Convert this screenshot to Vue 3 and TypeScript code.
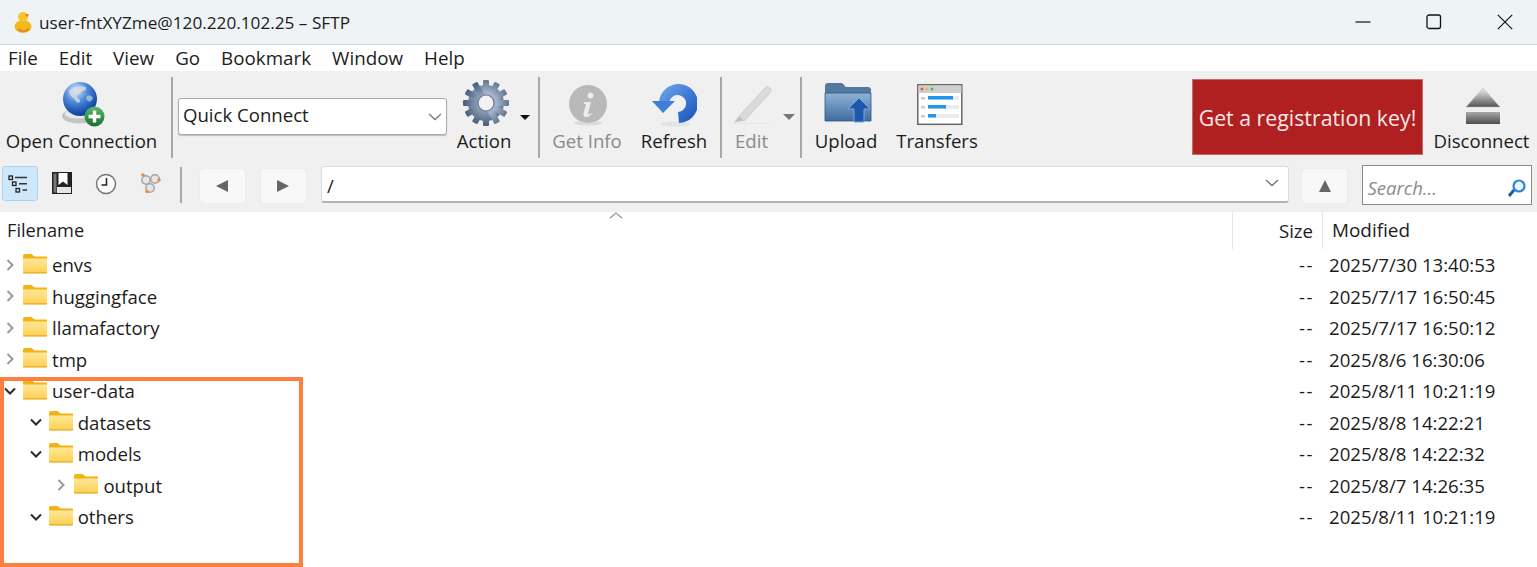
<script setup lang="ts">
interface Row { name: string; depth: number; open: boolean; date: string }
const rows: Row[] = [
  { name: 'envs', depth: 0, open: false, date: '2025/7/30 13:40:53' },
  { name: 'huggingface', depth: 0, open: false, date: '2025/7/17 16:50:45' },
  { name: 'llamafactory', depth: 0, open: false, date: '2025/7/17 16:50:12' },
  { name: 'tmp', depth: 0, open: false, date: '2025/8/6 16:30:06' },
  { name: 'user-data', depth: 0, open: true, date: '2025/8/11 10:21:19' },
  { name: 'datasets', depth: 1, open: true, date: '2025/8/8 14:22:21' },
  { name: 'models', depth: 1, open: true, date: '2025/8/8 14:22:32' },
  { name: 'output', depth: 2, open: false, date: '2025/8/7 14:26:35' },
  { name: 'others', depth: 1, open: true, date: '2025/8/11 10:21:19' },
]
const menus = ['File', 'Edit', 'View', 'Go', 'Bookmark', 'Window', 'Help']
const indent = (d: number) => ({ paddingLeft: `${d * 25.7}px` })
const gearTeeth = [0, 30, 60, 90, 120, 150]
</script>

<template>
  <div class="app">
    <header class="title">
      <svg class="duck" width="22" height="24" viewBox="0 0 22 24">
        <ellipse cx="11" cy="16.500" rx="8.500" ry="6.500" fill="#f5b81f"/>
        <circle cx="11" cy="7" r="5" fill="#f7c52b"/>
        <path d="M13 4.500l4-.5-1.500 3z" fill="#e8701a"/>
        <path d="M6 19c3 3 8 3 11 0" stroke="#dc8f14" stroke-width="2" fill="none"/>
      </svg>
      <span class="title-text">user-fntXYZme@120.220.102.25 – SFTP</span>
      <div class="win">
        <svg width="16" height="16" viewBox="0 0 16 16"><path d="M.5 8h15" stroke="#111" stroke-width="1.200"/></svg>
        <svg width="16" height="16" viewBox="0 0 16 16"><rect x="1" y="1" width="13.500" height="13.500" rx="2" fill="none" stroke="#111" stroke-width="1.300"/></svg>
        <svg width="16" height="16" viewBox="0 0 16 16"><path d="M.8.800l14.400 14.400M15.200.800L.8 15.200" stroke="#111" stroke-width="1.200"/></svg>
      </div>
    </header>

    <nav class="menu">
      <span v-for="m in menus" :key="m">{{ m }}</span>
    </nav>

    <section class="tools">
      <div class="row1">
        <div class="tool t-open">
          <svg width="48" height="48" viewBox="0 0 48 48">
            <defs>
              <radialGradient id="gl" cx=".38" cy=".25" r=".85"><stop offset="0" stop-color="#dfe9f6"/><stop offset=".4" stop-color="#4f8ad8"/><stop offset=".8" stop-color="#124aa8"/><stop offset="1" stop-color="#0c2f78"/></radialGradient>
              <linearGradient id="gr" x1="0" y1="0" x2="0" y2="1"><stop offset="0" stop-color="#5cb868"/><stop offset="1" stop-color="#17702f"/></linearGradient>
            </defs>
            <ellipse cx="21" cy="37" rx="17" ry="7.500" fill="#c2c4c7"/>
            <ellipse cx="20" cy="35" rx="13" ry="4.500" fill="#e8e8ea"/>
            <circle cx="22" cy="20" r="17" fill="url(#gl)"/>
            <path d="M11 12c4-4 11-6 17-4 1 3-3 4-5 5-1 3-4 2-4 5 1 2 4 2 3 5-2 2-4 0-5-2-1-3-5-2-6-9z" fill="#d8e0e8" opacity=".75"/>
            <path d="M29 17c3-1 5 0 6 2-1 3-3 4-5 3-2-1-2-4-1-5z" fill="#bcd0e6" opacity=".7"/>
            <circle cx="36.500" cy="37.500" r="10" fill="url(#gr)"/>
            <path d="M36.500 31.500v12M30.500 37.500h12" stroke="#fff" stroke-width="3.400"/>
          </svg>
          <span>Open Connection</span>
        </div>
        <i class="sep s1"></i>
        <div class="combo">
          <span>Quick Connect</span>
          <svg width="14" height="8" viewBox="0 0 14 8"><path d="M1 1l6 5.500L13 1" fill="none" stroke="#777" stroke-width="1.300"/></svg>
        </div>
        <div class="tool t-action">
          <svg width="48" height="48" viewBox="0 0 48 48">
            <defs><radialGradient id="ge" gradientUnits="userSpaceOnUse" cx="24" cy="21" r="25"><stop offset=".3" stop-color="#a3b3cb"/><stop offset=".65" stop-color="#74889f"/><stop offset="1" stop-color="#4c5f84"/></radialGradient></defs>
            <g fill="url(#ge)">
              <circle cx="24" cy="24" r="18"/>
              <rect v-for="a in gearTeeth" :key="a" x="21" y="1" width="6" height="46" rx="1.200" :transform="`rotate(${a} 24 24)`"/>
            </g>
            <circle cx="24" cy="24" r="8" fill="#f2f2f2" stroke="#66789a" stroke-width="1.200"/>
          </svg>
          <span>Action</span>
        </div>
        <i class="caret dark c1"></i>
        <i class="sep s2"></i>
        <div class="tool t-info dim">
          <svg width="40" height="46" viewBox="0 0 40 46">
            <ellipse cx="20" cy="39" rx="14" ry="2.500" fill="#dcdcdc"/>
            <circle cx="20" cy="20" r="19" fill="#b9b9b9"/>
            <path d="M22.500 8.500a3 3 0 1 1-.01 0zM16 18h7l-3 12c0 1 1 1 3-1l.8 1c-3 3.600-9 4.500-8.300-.5L18 20h-2.400z" fill="#ececec"/>
          </svg>
          <span>Get Info</span>
        </div>
        <div class="tool t-refresh">
          <svg width="46" height="46" viewBox="0 0 46 46">
            <defs><linearGradient id="rf" x1="0" y1="0" x2="1" y2="1"><stop offset="0" stop-color="#74a8ea"/><stop offset=".55" stop-color="#3a78d6"/><stop offset="1" stop-color="#1a4fb2"/></linearGradient></defs>
            <ellipse cx="24" cy="44" rx="15" ry="2.500" fill="#e4e4e4"/>
            <path d="M8 22A19.500 19.500 0 1 1 28 43L27 32A8.500 8.500 0 1 0 18.500 21Z" fill="url(#rf)"/>
            <path d="M1 21L24 21L12 33Z" fill="#3f7ed8"/>
          </svg>
          <span>Refresh</span>
        </div>
        <i class="sep s3"></i>
        <div class="tool t-edit dim">
          <svg width="42" height="46" viewBox="0 0 42 46">
            <path d="M8 36L34 8c2-2 4-1 5 0s2 3 0 5L13 41z" fill="#dadada" stroke="#c8c8c8" stroke-width=".8"/>
            <path d="M8 36l5 5-10 1.500z" fill="#c4c4c4"/>
            <path d="M2 43.500h36" stroke="#e6e6e6" stroke-width="1.200"/>
          </svg>
          <span>Edit</span>
        </div>
        <i class="caret gray c2"></i>
        <i class="sep s4"></i>
        <div class="tool t-upload">
          <svg width="48" height="46" viewBox="0 0 48 46">
            <defs><linearGradient id="fd" x1="0" y1="0" x2="0" y2="1"><stop offset="0" stop-color="#8fb2d6"/><stop offset="1" stop-color="#3f6c9f"/></linearGradient></defs>
            <path d="M1 6a3 3 0 0 1 3-3h13c3 0 3 3 5 4h22a3 3 0 0 1 3 3v30H1z" fill="#54799f"/>
            <path d="M1 13h46v28H1z" fill="url(#fd)" stroke="#2f5580" stroke-width=".8"/>
            <path d="M35 18l11 11h-6v13H30V29h-6z" fill="#1f57ad" stroke="#7fa7d8"/>
          </svg>
          <span>Upload</span>
        </div>
        <div class="tool t-transfers">
          <svg width="46" height="42" viewBox="0 0 46 42">
            <rect x=".8" y=".8" width="44" height="39.500" fill="#fff" stroke="#666" stroke-width="1.500"/>
            <rect x="1.500" y="1.500" width="43" height="7.500" fill="#cfcfcf"/>
            <circle cx="5" cy="5" r="1.500" fill="#ef5350"/><circle cx="10" cy="5" r="1.500" fill="#f6b73c"/><circle cx="15" cy="5" r="1.500" fill="#3fbf5f"/>
            <rect x="4" y="13" width="4" height="2.500" fill="#ccc"/><rect x="11" y="12" width="31" height="4" fill="#ececec"/><rect x="11" y="12" width="25" height="3.500" fill="#2196e8"/>
            <rect x="4" y="22" width="4" height="2.500" fill="#ccc"/><rect x="11" y="21" width="31" height="4" fill="#ececec"/><rect x="11" y="21" width="18" height="3.500" fill="#2196e8"/>
            <rect x="4" y="31" width="4" height="2.500" fill="#ccc"/><rect x="11" y="30" width="31" height="4" fill="#ececec"/><rect x="11" y="30" width="8" height="3.500" fill="#2196e8"/>
          </svg>
          <span>Transfers</span>
        </div>
        <div class="reg">Get a registration key!</div>
        <div class="tool t-disc">
          <svg width="36" height="40" viewBox="0 0 36 40">
            <defs>
              <linearGradient id="dc" x1="0" y1="0" x2="0" y2="1"><stop offset="0" stop-color="#f2f2f2"/><stop offset="1" stop-color="#555"/></linearGradient>
              <linearGradient id="dd" x1="0" y1="0" x2="0" y2="1"><stop offset="0" stop-color="#a8a8a8"/><stop offset="1" stop-color="#4d4d4d"/></linearGradient>
            </defs>
            <path d="M18 1l17 19H1z" fill="url(#dc)" stroke="#bbb" stroke-width=".5"/>
            <rect x="1" y="25" width="34" height="12" fill="url(#dd)"/>
          </svg>
          <span>Disconnect</span>
        </div>
      </div>

      <div class="row2">
        <div class="view-on">
          <svg width="20" height="20" viewBox="0 0 20 20"><g fill="none" stroke="#222" stroke-width="1.300"><rect x="1" y="2" width="3.500" height="3.500"/><rect x="4.500" y="8" width="3.500" height="3.500"/><rect x="8" y="14.500" width="3.500" height="3.500"/></g><path d="M7 3.500h12M11 9.800h8M14.500 16h4.500" stroke="#333" stroke-width="1.400"/></svg>
        </div>
        <svg class="v2" width="20" height="22" viewBox="0 0 20 22"><rect width="20" height="22" fill="#222"/><rect x="1.500" y="1.500" width="3" height="19" fill="#777"/><path d="M6 0h9v12l-4.500-3.500L6 12z" fill="#fff" transform="translate(.5 1)"/><rect x="5" y="15" width="14" height="6" fill="#e6e6e6"/></svg>
        <svg class="v3" width="22" height="22" viewBox="0 0 22 22"><circle cx="11" cy="11" r="9.500" fill="#fbfbfb" stroke="#777" stroke-width="1.500"/><path d="M11.500 5v7H6.500" fill="none" stroke="#222" stroke-width="1.500"/></svg>
        <svg class="v4" width="24" height="24" viewBox="0 0 24 24"><g fill="#e4e4e4" stroke="#a5a5a5" stroke-width="1.500"><circle cx="8" cy="10" r="4.200"/><circle cx="17" cy="9" r="4.200"/><circle cx="12" cy="18" r="4.200"/></g><g fill="#f08a3c"><circle cx="5" cy="5" r="1.800"/><circle cx="21" cy="10" r="1.800"/><circle cx="9" cy="21.500" r="1.800"/></g></svg>
        <i class="sep s5"></i>
        <button class="nav n1"><i class="tri left"></i></button>
        <button class="nav n2"><i class="tri right"></i></button>
        <div class="path">
          <span>/</span>
          <svg width="14" height="8" viewBox="0 0 14 8"><path d="M1 1l6 5.500L13 1" fill="none" stroke="#777" stroke-width="1.300"/></svg>
        </div>
        <button class="nav n3"><i class="tri up"></i></button>
        <div class="search">
          <span>Search...</span>
          <svg width="20" height="20" viewBox="0 0 20 20"><path d="M7 12l-5 6" stroke="#1e5aa8" stroke-width="3"/><circle cx="12" cy="8" r="5.500" fill="#e8f3fb" stroke="#2f86cf" stroke-width="2.200"/></svg>
        </div>
      </div>
    </section>

    <div class="table">
      <div class="head">
        <div class="h-name">Filename<svg class="sort" width="14" height="7" viewBox="0 0 14 7"><path d="M1 6l6-5 6 5" fill="none" stroke="#999" stroke-width="1.200"/></svg></div>
        <div class="h-size">Size</div>
        <div class="h-mod">Modified</div>
      </div>
      <div v-for="r in rows" :key="r.name" class="row">
        <div class="name" :style="indent(r.depth)">
          <svg class="chev" width="12" height="12" viewBox="0 0 12 12">
            <path v-if="r.open" d="M1 3.500l5 5 5-5" fill="none" stroke="#2a2a2a" stroke-width="2"/>
            <path v-else d="M3.500 1l5 5-5 5" fill="none" stroke="#999" stroke-width="2"/>
          </svg>
          <svg class="folder" width="24" height="20" viewBox="0 0 24 20">
            <defs><linearGradient id="ff" x1="0" y1="0" x2="0" y2="1"><stop offset="0" stop-color="#ffe89b"/><stop offset="1" stop-color="#fdcf50"/></linearGradient></defs>
            <path d="M0 2a2 2 0 0 1 2-2h6c2 0 2 2.500 4 2.500h12V6H0z" fill="#f5b10f"/>
            <path d="M0 4.500h24V18a1.500 1.500 0 0 1-1.500 1.500h-21A1.500 1.500 0 0 1 0 18z" fill="url(#ff)"/>
            <path d="M0 18.800h24" stroke="#e8ad2c" stroke-width="1.200"/>
          </svg>
          <span class="fname">{{ r.name }}</span>
        </div>
        <div class="size">--</div>
        <div class="mod">{{ r.date }}</div>
      </div>
    </div>

    <div class="mark"></div>
  </div>
</template>

<style>
html, body { margin: 0; background: #fff; overflow: hidden; }
</style>

<style scoped>
.app { position: relative; width: 1537px; height: 567px; overflow: hidden; font-family: "Open Sans", "Noto Sans", sans-serif; font-size: 18.6px; color: #1c1c1c; background: #fff; }
.title { height: 44px; background: #eef3f5; border-bottom: 1px solid #d4d8da; display: flex; align-items: center; padding-left: 12px; box-sizing: content-box; }
.duck { flex: none; }
.title-text { margin-left: 5px; font-size: 17.2px; }
.win { margin-left: auto; display: flex; gap: 55px; padding-right: 24px; align-items: center; }
.menu { height: 26px; display: flex; align-items: center; padding-left: 8px; gap: 21px; font-size: 18.8px; }
.tools { height: 141px; background: #f0f0f0; display: flex; flex-direction: column; }
.row1 { height: 92px; display: flex; align-items: flex-start; }
.tool { display: flex; flex-direction: column; align-items: center; flex: none; white-space: nowrap; padding-top: 8px; }
.tool svg { height: 48px; }
.tool span { margin-top: 2px; line-height: 24px; }
.dim span { color: #8a8a8a; }
.sep { display: block; width: 2px; background: #a8a8a8; flex: none; }
.row1 .sep { height: 81px; margin-top: 6px; }
.t-open { width: 151px; margin-left: 6px; }
.s1 { margin-left: 14px; }
.combo { width: 269px; height: 37px; margin: 27px 0 0 5px; flex: none; box-sizing: border-box; background: #fff; border: 1px solid #ababab; border-radius: 3px; box-shadow: 0 1px 1px #bbb; display: flex; align-items: center; justify-content: space-between; padding: 0 4px 4px; }
.combo svg { margin-top: 4px; }
.t-action { width: 54px; margin-left: 10px; }
.t-action svg { transform: translate(2px, 0); }
.t-info svg { transform: translate(1px, 4px); }
.t-disc svg { transform: translate(1px, 4px); }
.t-upload svg { transform: translate(2px, 0); }
.t-transfers svg { transform: translate(3px, 2px); }
.caret { width: 0; height: 0; border-left: 5px solid transparent; border-right: 5px solid transparent; flex: none; }
.caret.dark { border-top: 5px solid #111; }
.caret.gray { border-top: 6px solid #777; border-left-width: 6px; border-right-width: 6px; }
.c1 { margin: 44px 0 0 9px; }
.s2 { margin-left: 8px; }
.t-info { width: 70px; margin-left: 12px; }
.t-refresh { width: 66px; margin-left: 19px; }
.s3 { margin-left: 13px; }
.t-edit { width: 33px; margin-left: 13px; }
.c2 { margin: 43px 0 0 15px; }
.s4 { margin-left: 5px; }
.t-upload { width: 64px; margin-left: 12px; }
.t-transfers { width: 80px; margin-left: 19px; }
.reg { width: 231px; height: 76px; margin: 8px 0 0 215px; flex: none; background: #b02020; outline: 1px solid #c96a6a; outline-offset: -1px; color: #f6e9e9; font-size: 21.3px; display: flex; align-items: center; justify-content: center; white-space: nowrap; }
.t-disc { width: 95px; margin-left: 11px; }
.row2 { height: 49px; display: flex; align-items: flex-start; }
.view-on { width: 36px; height: 35px; margin: 3px 0 0 2px; box-sizing: border-box; background: #cfe7fb; border: 1px solid #a6d3f6; border-radius: 3px; display: flex; align-items: center; justify-content: center; flex: none; padding-right: 5px; }
.v2 { margin: 9px 0 0 14px; flex: none; }
.v3 { margin: 10px 0 0 23px; flex: none; }
.v4 { margin: 7px 0 0 21px; flex: none; }
.row2 .sep { height: 36px; margin: 4px 0 0 18px; width: 1.500px; }
.nav { width: 47px; height: 36px; margin-top: 5px; border: 1px solid #ececec; border-radius: 5px; background: #f8f8f8; padding: 0; display: flex; align-items: center; justify-content: center; flex: none; }
.n1 { margin-left: 17px; }
.n2 { margin-left: 14px; }
.n3 { margin-left: 12px; }
.tri { display: block; width: 0; height: 0; }
.tri.left { border-top: 6px solid transparent; border-bottom: 6px solid transparent; border-right: 12px solid #666; }
.tri.right { border-top: 6px solid transparent; border-bottom: 6px solid transparent; border-left: 12px solid #666; }
.tri.up { border-left: 6px solid transparent; border-right: 6px solid transparent; border-bottom: 12px solid #666; }
.path { width: 968px; height: 37px; margin: 3px 0 0 14.500px; flex: none; box-sizing: border-box; background: #fff; border: 1px solid #dcdcdc; border-bottom: 2px solid #b5b5b5; border-radius: 3px; display: flex; align-items: center; justify-content: space-between; padding: 2px 9px 0 5px; }
.path svg { margin-top: -4px; }
.search { width: 170px; height: 40px; margin: 2px 0 0 13.500px; flex: none; box-sizing: border-box; background: #fff; border: 1.500px solid #8a8a8a; display: flex; align-items: center; justify-content: space-between; padding: 5px 4px 0 5px; font-style: italic; font-size: 18.500px; color: #8b8b8b; }
.table { display: flex; flex-direction: column; }
.head { height: 37px; display: grid; grid-template-columns: 1232px 90px 215px; position: relative; }
.h-name, .h-size, .h-mod { display: flex; align-items: center; padding-bottom: 1px; box-sizing: border-box; }
.h-name { padding-left: 7px; font-size: 18.2px; }
.sort { position: absolute; left: 609px; top: 0; }
.h-size { border-left: 1px solid #e4e4e4; justify-content: flex-end; padding-right: 9px; }
.h-mod { border-left: 1px solid #e4e4e4; padding-left: 9px; font-size: 18.9px; }
.row { height: 31.500px; display: grid; grid-template-columns: 1232px 90px 215px; align-items: center; }
.name { display: flex; align-items: center; padding-left: 0; }
.chev { margin-left: 4px; flex: none; }
.folder { margin-left: 7px; flex: none; transform: translateY(-1px); }
.fname { margin-left: 5px; }
.size { text-align: right; padding-right: 8px; letter-spacing: 1.500px; }
.mod { padding-left: 7px; }
.mark { position: absolute; left: 0; top: 377px; width: 303px; height: 190px; box-sizing: border-box; border: 4px solid #ff7f3f; }
</style>
